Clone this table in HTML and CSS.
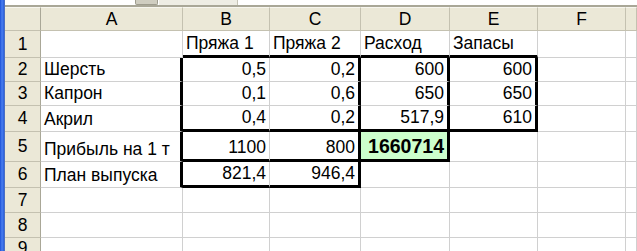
FILE: index.html
```html
<!DOCTYPE html>
<html lang="ru">

<head>
    <meta charset="UTF-8">
    <meta name="viewport" content="width=device-width, initial-scale=1.0">
    <title>Пряжа</title>
    <link rel="stylesheet" href="styles.css">
</head>

<body>
    <div id="window">
        <div class="frame"></div>
        <div id="book">
            <div id="toolbar">
                <div class="tool-gap"></div>
                <div class="tool-btn"></div>
                <div class="tool-box"></div>
            </div>
            <div id="sheet">
                <!-- column letters -->
                <div class="hd corner"></div>
                <div class="hd">A</div>
                <div class="hd">B</div>
                <div class="hd">C</div>
                <div class="hd">D</div>
                <div class="hd">E</div>
                <div class="hd">F</div>
                <div class="hd last"></div>

                <!-- 1 -->
                <div class="rh">1</div>
                <div class="c"></div>
                <div class="c tb">Пряжа 1</div>
                <div class="c tb">Пряжа 2</div>
                <div class="c tb">Расход</div>
                <div class="c tb">Запасы</div>
                <div class="c"></div>
                <div class="c"></div>

                <!-- 2 -->
                <div class="rh">2</div>
                <div class="c tr">Шерсть</div>
                <div class="c n">0,5</div>
                <div class="c n tr">0,2</div>
                <div class="c n tr">600</div>
                <div class="c n tr">600</div>
                <div class="c"></div>
                <div class="c"></div>

                <!-- 3 -->
                <div class="rh">3</div>
                <div class="c tr">Капрон</div>
                <div class="c n">0,1</div>
                <div class="c n tr">0,6</div>
                <div class="c n tr">650</div>
                <div class="c n tr">650</div>
                <div class="c"></div>
                <div class="c"></div>

                <!-- 4 -->
                <div class="rh">4</div>
                <div class="c tr">Акрил</div>
                <div class="c n tb">0,4</div>
                <div class="c n tr tb">0,2</div>
                <div class="c n tr tb">517,9</div>
                <div class="c n tr tb">610</div>
                <div class="c"></div>
                <div class="c"></div>

                <!-- 5 -->
                <div class="rh">5</div>
                <div class="c tr">Прибыль на 1 т</div>
                <div class="c n tb">1100</div>
                <div class="c n tr tb">800</div>
                <div class="c n tr tb total">1660714</div>
                <div class="c"></div>
                <div class="c"></div>
                <div class="c"></div>

                <!-- 6 -->
                <div class="rh">6</div>
                <div class="c tr">План выпуска</div>
                <div class="c n tb">821,4</div>
                <div class="c n tr tb">946,4</div>
                <div class="c"></div>
                <div class="c"></div>
                <div class="c"></div>
                <div class="c"></div>

                <!-- 7 -->
                <div class="rh">7</div>
                <div class="c"></div>
                <div class="c"></div>
                <div class="c"></div>
                <div class="c"></div>
                <div class="c"></div>
                <div class="c"></div>
                <div class="c"></div>

                <!-- 8 -->
                <div class="rh">8</div>
                <div class="c"></div>
                <div class="c"></div>
                <div class="c"></div>
                <div class="c"></div>
                <div class="c"></div>
                <div class="c"></div>
                <div class="c"></div>

                <!-- 9 -->
                <div class="rh">9</div>
                <div class="c"></div>
                <div class="c"></div>
                <div class="c"></div>
                <div class="c"></div>
                <div class="c"></div>
                <div class="c"></div>
                <div class="c"></div>
            </div>
        </div>
    </div>
</body>

</html>
```

FILE: styles.css
```css
* {
    box-sizing: border-box;
}

body {
    margin: 0;
    width: 637px;
    height: 251px;
    overflow: hidden;
    background-color: white;
    font-family: "Liberation Sans", Arial, sans-serif;
    font-size: 17.5px;
    color: black;
}

#window {
    display: flex;
    height: 251px;
}

.frame {
    width: 5px;
    flex-shrink: 0;
    background: linear-gradient(to right, #1b4fd6, #4a7ff0 40%, #2a5fdc 80%, #6b7fa8);
}

#book {
    flex: 1;
    display: flex;
    flex-direction: column;
}

#toolbar {
    display: flex;
    height: 8px;
    background-color: white;
    border-bottom: 2px solid #a9a797;
}

.tool-gap {
    width: 130px;
}

.tool-btn {
    width: 23px;
    height: 5px;
    background-color: #cfcdc0;
    border: 1px solid #9e9c8e;
    border-top: none;
    border-radius: 0 0 2px 2px;
}

.tool-box {
    width: 79px;
    height: 5px;
    margin-left: 1px;
    background-color: #eeede4;
    border-right: 1px solid #c6c4b6;
}

#sheet {
    display: grid;
    grid-template-columns: 36px 142px 87px 91px 89px 88px 88px 1fr;
    grid-template-rows: 24px 27px 24px 24px 26px 30px 26px 25px 25px 1fr;
}

.hd,
.rh {
    background-color: #ebe8d7;
    border-right: 1px solid #c4c1b0;
    border-bottom: 1px solid #c4c1b0;
    display: flex;
    align-items: center;
    justify-content: center;
}

.hd {
    border-top: 1px solid #f7f6ef;
}

.rh {
    border-right: 1px solid #a9a797;
}

.corner {
    border-right: 1px solid #a9a797;
}

.c {
    border-right: 1px solid #d0d0d0;
    border-bottom: 1px solid #d0d0d0;
    display: flex;
    align-items: flex-end;
    padding: 0 3px 1px 3px;
    white-space: nowrap;
    overflow: visible;
}

.n {
    justify-content: flex-end;
}

/* thick range borders */
.tb {
    border-bottom: 3px solid black;
}

.tr {
    border-right: 3px solid black;
}

.total {
    background-color: #ccffcc;
    font-size: 19.5px;
    font-weight: bold;
    padding-right: 3px;
    padding-bottom: 1px;
}
```
